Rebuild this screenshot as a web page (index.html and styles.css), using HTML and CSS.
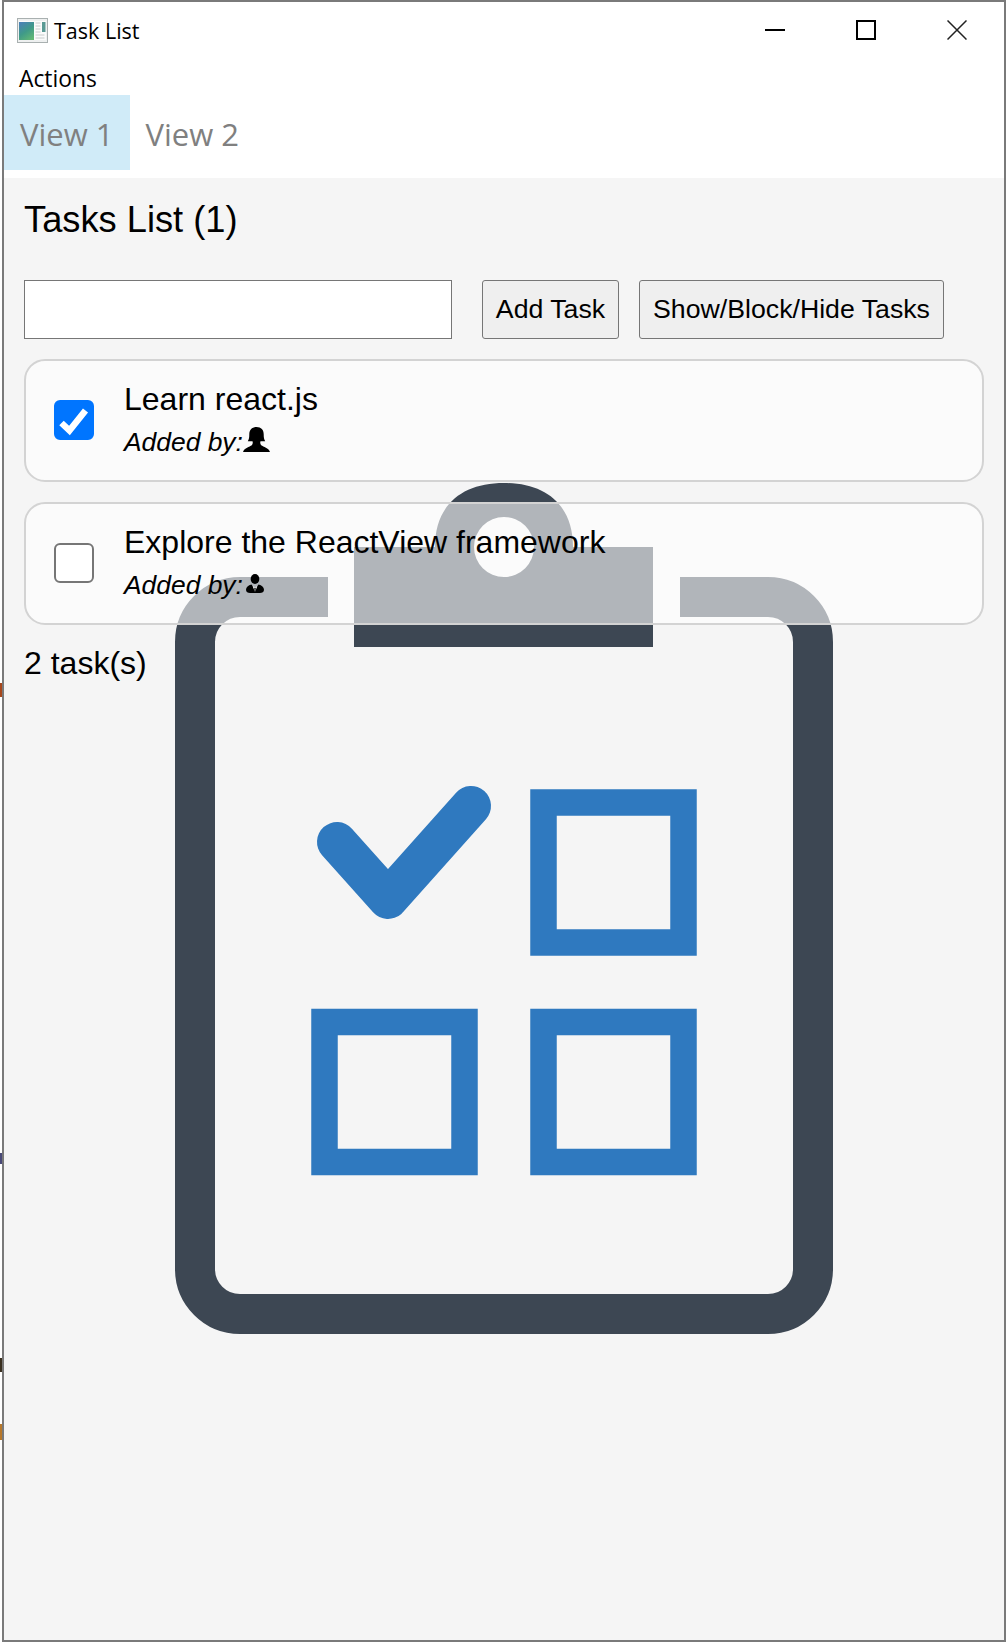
FILE: index.html
```html
<!DOCTYPE html>
<html lang="en">

<head>
    <meta charset="UTF-8">
    <meta name="viewport" content="width=device-width, initial-scale=1.0">
    <title>Task List</title>
    <link rel="stylesheet" href="styles.css">
</head>

<body>

    <!-- bits of the desktop behind the window, showing in the left edge -->
    <span class="stray stray-1"></span>
    <span class="stray stray-2"></span>
    <span class="stray stray-3"></span>
    <span class="stray stray-4"></span>

    <div class="window">
        <header class="chrome">
            <div class="title-bar">
                <svg class="app-icon" viewBox="0 0 31 25" aria-hidden="true">
                    <defs>
                        <linearGradient id="app-panel" x1="0.2" y1="0" x2="0.8" y2="1">
                            <stop offset="0" stop-color="#4a82b4" />
                            <stop offset="0.5" stop-color="#3f9a88" />
                            <stop offset="1" stop-color="#62b874" />
                        </linearGradient>
                    </defs>
                    <rect x="0.5" y="0.5" width="30" height="24" fill="#eef0f0" stroke="#a9b0b0" />
                    <rect x="2" y="3" width="27" height="19" fill="#fbfbfb" />
                    <rect x="2" y="4" width="15" height="18" fill="url(#app-panel)" />
                    <rect x="25" y="4" width="3.500" height="10" fill="#5a9a94" />
                    <path d="M18.500 5h5M18.500 8h5M18.500 11h5M18.500 14h5M18.500 17h9M18.500 20h9" stroke="#c8cccc" stroke-width="1" />
                </svg>
                <span class="app-name">Task List</span>
                <div class="window-buttons">
                    <svg class="win-btn" viewBox="0 0 20 20" aria-hidden="true"><path d="M0 10h20" stroke="#000" stroke-width="2" /></svg>
                    <svg class="win-btn" viewBox="0 0 20 20" aria-hidden="true"><rect x="1" y="1" width="18" height="18" fill="none" stroke="#000" stroke-width="2" /></svg>
                    <svg class="win-btn" viewBox="0 0 20 20" aria-hidden="true"><path d="M0.500 0.500l19 19M19.500 0.500l-19 19" stroke="#222" stroke-width="1.500" /></svg>
                </div>
            </div>
            <div class="menu-bar">Actions</div>
            <nav class="tabs">
                <div class="tab tab-active">View 1</div>
                <div class="tab">View 2</div>
            </nav>
        </header>

        <main class="content">
            <!-- big clipboard watermark, cards sit on top of it -->
            <svg class="watermark" viewBox="175 483 658 851" aria-hidden="true">
                <path d="M328 597H240A45 45 0 0 0 195 642V1269A45 45 0 0 0 240 1314H768A45 45 0 0 0 813 1269V642A45 45 0 0 0 768 597H680" fill="none" stroke="#3d4753" stroke-width="40" />
                <path fill="#3d4753" fill-rule="evenodd" d="M354 547H435C435 505 462 483 504 483C546 483 573 505 573 547H653V647H354ZM474 547A30 30 0 0 0 534 547A30 30 0 0 0 474 547Z" />
                <path d="M337 842L388 899L471 806" fill="none" stroke="#2f79bf" stroke-width="40" stroke-linecap="round" stroke-linejoin="round" />
                <g fill="none" stroke="#2f79bf" stroke-width="26.500">
                    <rect x="543.500" y="802.500" width="140" height="140" />
                    <rect x="324.500" y="1022" width="140" height="140" />
                    <rect x="543.500" y="1022" width="140" height="140" />
                </g>
            </svg>

            <h1 class="page-title">Tasks List (1)</h1>

            <form class="task-form">
                <input class="task-input" type="text">
                <button class="btn btn-add" type="button">Add Task</button>
                <button class="btn btn-filter" type="button">Show/Block/Hide Tasks</button>
            </form>

            <div class="task">
                <input class="task-check" type="checkbox" checked>
                <div class="task-info">
                    <div class="task-name">Learn react.js</div>
                    <div class="task-owner">
                        <i>Added by:</i>
                        <svg class="user-icon" viewBox="0 0 27 25" aria-hidden="true">
                            <path d="M13.500 0C8.800 0 6.300 3 6.300 7.300C6.300 10.500 6 12.500 4.800 14.200L9.500 14.200C10 15.800 9.800 17.300 8.800 18.200C6.500 20 1.500 20.500 0 25H27C25.500 20.500 20.500 20 18.200 18.200C17.200 17.300 17 15.800 17.500 14.200L22.200 14.200C21 12.500 20.700 10.500 20.700 7.300C20.700 3 18.200 0 13.500 0Z" />
                        </svg>
                    </div>
                </div>
            </div>

            <div class="task">
                <input class="task-check" type="checkbox">
                <div class="task-info">
                    <div class="task-name">Explore the ReactView framework</div>
                    <div class="task-owner">
                        <i>Added by:</i>
                        <svg class="user-icon user-icon-small" viewBox="0 0 20 21" aria-hidden="true">
                            <ellipse cx="10" cy="5.500" rx="4.800" ry="5.500" />
                            <path d="M6 11.500C2.500 12.500 0 14.500 0 17.500C0 20 2 21 4.500 21H15.500C18 21 20 20 20 17.500C20 14.500 17.500 12.500 14 11.500L10 16Z" />
                            <path d="M7 12.500L10 20L13 12.500L10 15.500Z" fill="#fff" />
                            <path d="M9.200 15.500H10.800L10.500 20H9.500Z" />
                        </svg>
                    </div>
                </div>
            </div>

            <p class="task-count">2 task(s)</p>
        </main>
    </div>

</body>

</html>
```

FILE: styles.css
```css
* {
    box-sizing: border-box;
    margin: 0;
    padding: 0;
}

body {
    position: relative;
    height: 1642px;
    overflow: hidden;
    background-color: #fff;
    font-family: 'Liberation Sans', Arial, sans-serif;
    color: #000;
}

.stray {
    position: absolute;
    left: 0;
    width: 2px;
}

.stray-1 {
    top: 683px;
    height: 14px;
    background-color: #a8481c;
}

.stray-2 {
    top: 1153px;
    height: 11px;
    background-color: #4a4a78;
}

.stray-3 {
    top: 1358px;
    height: 14px;
    background-color: #3a3020;
}

.stray-4 {
    top: 1424px;
    height: 16px;
    background-color: #b8782a;
}

.window {
    display: flex;
    flex-direction: column;
    height: 1642px;
    margin: 0 2px;
    border: 2px solid #7a7a7a;
}

/* Title bar, menu and tabs */
.chrome {
    height: 176px;
    background-color: #fff;
    font-family: 'Open Sans', 'Noto Sans', sans-serif;
}

.title-bar {
    display: flex;
    align-items: center;
    height: 53px;
    padding: 4px 37px 0 13px;
}

.app-icon {
    width: 31px;
    height: 25px;
}

.app-name {
    margin-left: 6px;
    font-size: 21.500px;
}

.window-buttons {
    display: flex;
    align-items: center;
    gap: 71px;
    margin-left: auto;
    margin-top: -2px;
}

.win-btn {
    display: block;
    width: 20px;
    height: 20px;
}

.menu-bar {
    height: 40px;
    padding: 9px 0 0 15px;
    font-size: 22.800px;
    line-height: 30px;
}

.tabs {
    display: flex;
    height: 75px;
}

.tab {
    padding: 2px 16px 0;
    font-size: 31px;
    line-height: 75px;
    color: #808080;
}

.tab-active {
    background-color: #d0ebf8;
}

/* Main area */
.content {
    position: relative;
    flex: 1;
    padding: 20px 20px 0;
    background-color: #f5f5f5;
}

.watermark {
    position: absolute;
    left: 171px;
    top: 305px;
    width: 658px;
    height: 851px;
}

.page-title {
    position: relative;
    height: 42px;
    margin-bottom: 40px;
    padding-top: 1px;
    font-size: 36.250px;
    font-weight: normal;
    line-height: 42px;
}

.task-form {
    position: relative;
    display: flex;
    height: 59px;
    margin-bottom: 20px;
}

.task-input {
    width: 428px;
    margin-right: 30px;
    border: 1px solid #767676;
    background-color: #fff;
}

.btn {
    border: 1.5px solid #767676;
    border-radius: 3px;
    background-color: #efefef;
    font-family: inherit;
    font-size: 26.700px;
    color: #000;
}

.btn-add {
    width: 137px;
    margin-right: 20px;
}

.btn-filter {
    width: 305px;
}

.task {
    position: relative;
    display: flex;
    align-items: center;
    height: 123px;
    margin-bottom: 20px;
    padding-left: 28px;
    border: 2px solid #d3d3d3;
    border-radius: 21px;
    background-color: rgba(255, 255, 255, 0.6);
}

.task-check {
    flex: none;
    width: 40px;
    height: 40px;
    margin-top: -2px;
    margin-right: 30px;
    appearance: none;
    border: 2px solid #767676;
    border-radius: 6px;
    background-color: #fff;
}

.task-check:checked {
    border-color: #0075ff;
    background-color: #0075ff;
    background-image: url("data:image/svg+xml,%3Csvg xmlns='http://www.w3.org/2000/svg' viewBox='0 0 36 36'%3E%3Cpath d='M5.500 21L13.500 28.500L29.500 8.500' fill='none' stroke='%23fff' stroke-width='6.500'/%3E%3C/svg%3E");
}

.task-name {
    margin-top: -2px;
    font-size: 32px;
    line-height: 40px;
}

.task-owner {
    display: flex;
    align-items: flex-start;
    height: 36px;
    margin-top: 5px;
    font-size: 26.400px;
    line-height: 36px;
}

.user-icon {
    display: block;
    width: 27px;
    height: 25px;
    margin-top: 3px;
}

.user-icon-small {
    width: 18px;
    height: 21px;
    margin-top: 6px;
    margin-left: 3px;
}

.task-count {
    position: relative;
    margin-top: -2px;
    font-size: 32px;
    line-height: 40px;
}
```
